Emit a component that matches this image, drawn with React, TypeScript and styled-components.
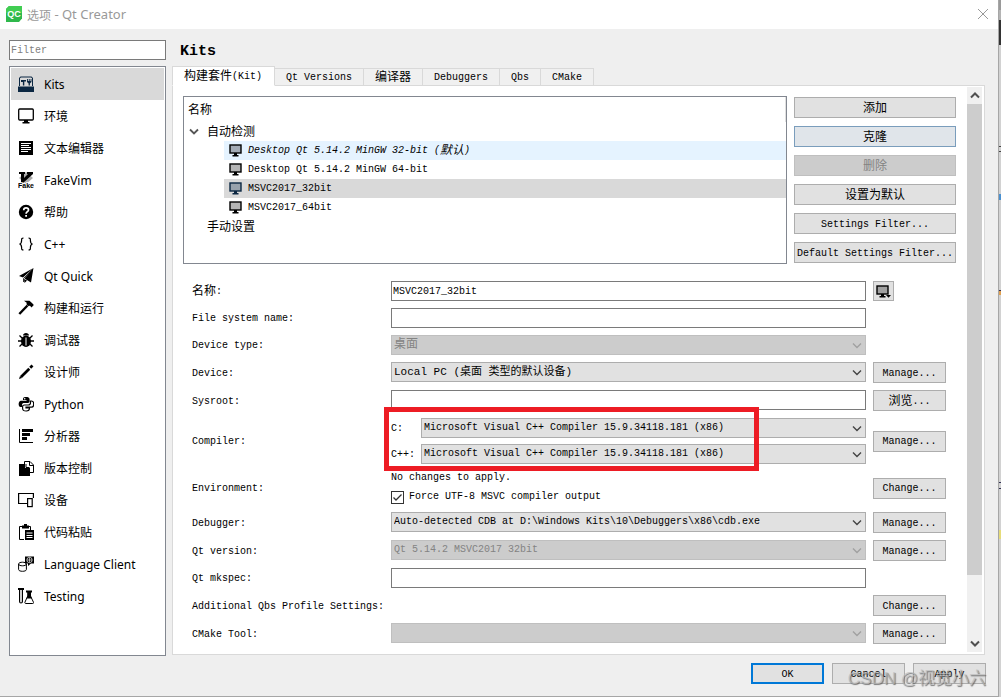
import React, { useState } from "react";
import styled, { createGlobalStyle, css } from "styled-components";

const mono = `"Liberation Mono", "Noto Sans CJK SC", monospace`;
const sans = `"Noto Sans", "Noto Sans CJK SC", sans-serif`;

const GlobalStyle = createGlobalStyle`
  *, *::before, *::after { box-sizing: border-box; }
  body { margin: 0; background: #efefef; color: #000; font: 10px/14px ${mono}; }
  button, input, select { font: inherit; color: inherit; margin: 0; border-radius: 0; }
  button:focus, input:focus, select:focus { outline: none; }
  svg { display: block; flex: none; }
`;

/* ---------- frame ---------- */

const Screen = styled.div`
  display: flex;
  min-height: 100vh;
`;

const Desktop = styled.div`
  width: 2px;
  background: linear-gradient(
    #9a9a9a 0 10px, #b4b4b4 10px 20px, #333 20px 45px, #d2d2d2 45px 146px,
    #444 146px 147px, #d2d2d2 147px 151px, #444 151px 152px, #d2d2d2 152px 194px,
    #4a90d0 194px 200px, #d2d2d2 200px 290px, #335 290px 291px, #e0a050 291px 295px,
    #d2d2d2 295px 482px, #335 482px 483px, #d2d2d2 483px 488px, #335 488px 489px,
    #d2d2d2 489px 530px, #e6dc7a 530px 539px, #d2d2d2 539px
  );
`;

const Window = styled.main`
  flex: 1;
  min-width: 0;
  display: flex;
  flex-direction: column;
  background: #efefef;
  border-right: 1px solid #a6a6a6;
  border-bottom: 1px solid #a6a6a6;
`;

const TitleBar = styled.header`
  display: flex;
  align-items: center;
  gap: 5px;
  height: 29px;
  padding: 0 9px 2px 6px;
  background: #fff;
  color: #999;
  font: 13px/18px ${sans};
`;

const Title = styled.span`
  flex: 1;
`;

const CloseButton = styled.button`
  padding: 0;
  border: 0;
  background: none;
`;

const Body = styled.div`
  flex: 1;
  display: flex;
  gap: 6px;
  padding: 11px 13px 0 9px;
`;

/* ---------- sidebar ---------- */

const Sidebar = styled.aside`
  width: 157px;
  display: flex;
  flex-direction: column;
  gap: 6px;
`;

const TextInput = styled.input`
  width: 100%;
  min-width: 0;
  height: 20px;
  padding: 0 1px;
  border: 1px solid #7a7a7a;
  background: #fff;
  &::placeholder { color: #808080; opacity: 1; }
`;

const PageList = styled.nav`
  flex: 1;
  padding: 1px;
  border: 1px solid #828790;
  background: #fff;
`;

const PageItem = styled.button<{ $active: boolean }>`
  display: flex;
  align-items: center;
  gap: 10px;
  width: 100%;
  height: 32px;
  padding: 0 7px;
  border: 0;
  background: ${(p) => (p.$active ? "#d9d9d9" : "transparent")};
  color: #000;
  font: 12px/18px ${sans};
  text-align: left;
  span { padding-top: 2px; }
`;

/* ---------- right side ---------- */

const Content = styled.section`
  flex: 1;
  min-width: 0;
  display: flex;
  flex-direction: column;
  padding-bottom: 1px;
`;

const Heading = styled.h1`
  margin: 0;
  padding: 2px 8px 4px;
  font-size: 15px;
  line-height: 20px;
`;

const TabBar = styled.div`
  display: flex;
  align-items: flex-end;
  margin-bottom: -1px;
  position: relative;
`;

const Tab = styled.button<{ $active: boolean }>`
  height: 18px;
  padding: 1px 11px 0;
  border: 1px solid #d9d9d9;
  border-left-width: 0;
  background: #f0f0f0;
  line-height: 15px;
  white-space: nowrap;
  ${(p) =>
    p.$active &&
    css`
      height: 20px;
      padding-right: 12px;
      border-left-width: 1px;
      border-bottom-color: #fff;
      background: #fff;
    `}
`;

const Cjk = styled.span`
  font-size: 12px;
  line-height: 12px;
  vertical-align: -1px;
`;

const Panel = styled.div`
  flex: 1;
  display: flex;
  border: 1px solid #d9d9d9;
  background: #fff;
`;

const Scrolled = styled.div`
  flex: 1;
  min-width: 0;
  padding: 10px 11px 9px 10px;
`;

const ScrollBar = styled.div`
  width: 15px;
  margin: 1px 2px 2px 0;
  display: flex;
  flex-direction: column;
  background: #f0f0f0;
`;

const ScrollArrow = styled.button`
  display: grid;
  place-items: center;
  height: 17px;
  padding: 0;
  border: 0;
  background: none;
`;

const ScrollThumb = styled.div`
  flex: 471;
  background: #cdcdcd;
`;

const ScrollRest = styled.div`
  flex: 60;
`;

const KitArea = styled.div`
  display: flex;
  gap: 7px;
`;

const Tree = styled.div`
  flex: 1;
  height: 168px;
  border: 1px solid #828790;
`;

const TreeHeader = styled.div`
  height: 25px;
  padding: 0 4px;
  border-right: 1px solid #e0e0e0;
  font: 12px/26px ${sans};
`;

const TreeGroup = styled.div`
  display: flex;
  align-items: center;
  height: 19px;
  padding-left: 5px;
  font: 12px/18px ${sans};
`;

const Twisty = styled.span`
  width: 18px;
`;

const KitRow = styled.div<{ $state: string }>`
  display: flex;
  align-items: center;
  gap: 6px;
  height: 19px;
  margin-left: 40px;
  padding-left: 5px;
  font-style: ${(p) => (p.$state === "hover" ? "italic" : "normal")};
  background: ${(p) => (p.$state === "hover" ? "#e5f3ff" : p.$state === "selected" ? "#d9d9d9" : "#fff")};
`;

const KitButtons = styled.div`
  width: 162px;
  display: flex;
  flex-direction: column;
  gap: 8px;
  padding-top: 1px;
`;

const PushButton = styled.button<{ $tone?: "hover" | "primary" }>`
  display: flex;
  align-items: center;
  justify-content: center;
  height: 21px;
  min-width: 73px;
  padding: 2px 0 0;
  border: 1px solid #adadad;
  background: #e1e1e1;
  line-height: 16px;
  white-space: nowrap;
  ${(p) => p.$tone === "hover" && css`border-color: #7a9dbc; background: #e0e5ea;`}
  ${(p) => p.$tone === "primary" && css`border: 2px solid #0078d7;`}
  &:disabled { border-color: #bfbfbf; background: #ccc; color: #838383; }
`;

const IconButton = styled(PushButton)`
  width: 21px;
  min-width: 0;
  height: 20px;
  padding: 0;
`;

const Form = styled.form`
  display: grid;
  gap: 7px 0;
  padding: 17px 10px 0 9px;
`;

const FormRow = styled.div`
  display: grid;
  grid-template-columns: 199px minmax(0, 1fr) 73px;
  align-items: center;
  min-height: 20px;
`;

const RowLabel = styled.label`
  padding-top: 2px;
`;

const Side = styled.div`
  display: flex;
  flex-direction: column;
  align-items: stretch;
`;

const Field = styled.div`
  align-self: start;
  padding-right: 7px;
`;

const SelectBox = styled.div`
  flex: 1;
  position: relative;
  svg { position: absolute; right: 4px; top: 7px; pointer-events: none; }
`;

const Select = styled.select<{ $size: number }>`
  appearance: none;
  display: block;
  width: 100%;
  height: 20px;
  padding: 0 20px 0 2px;
  border: 1px solid #adadad;
  background: #e1e1e1;
  font-size: ${(p) => p.$size}px;
  line-height: 16px;
  &:disabled { border-color: #bfbfbf; background: #ccc; color: #838383; opacity: 1; }
`;

const Compilers = styled.div`
  position: relative;
  display: grid;
  gap: 6px;
`;

const CompilerLine = styled.div`
  display: flex;
  align-items: center;
  label { width: 30px; padding-top: 1px; }
`;

const Highlight = styled.div`
  position: absolute;
  left: -7px;
  top: -11px;
  bottom: -7px;
  width: 375px;
  border: 5px solid #ed1c24;
  pointer-events: none;
`;

const Environment = styled.div`
  display: flex;
  flex-direction: column;
  gap: 5px;
  height: 34px;
`;

const CheckLabel = styled.label`
  display: flex;
  align-items: center;
  gap: 5px;
`;

const CheckBox = styled.span`
  display: grid;
  > * { grid-area: 1 / 1; }
  svg { pointer-events: none; }
`;

const Check = styled.input`
  appearance: none;
  width: 13px;
  height: 13px;
  border: 1px solid #333;
  background: #fff;
  &:not(:checked) + svg { visibility: hidden; }
`;

const Footer = styled.footer`
  position: relative;
  display: flex;
  justify-content: flex-end;
  gap: 8px;
  padding: 7px 12px 12px;
`;

const Watermark = styled.span`
  position: absolute;
  right: 12px;
  bottom: 5px;
  color: rgba(190, 190, 190, 0.7);
  text-shadow: 1px 1px 1px rgba(90, 90, 90, 0.8);
  font: 17px/24px "Liberation Sans", "Noto Sans CJK SC", sans-serif;
  white-space: nowrap;
  pointer-events: none;
`;

/* ---------- drawings ---------- */

const Chevron = ({ color = "#444", up = false, w = 1.4 }: { color?: string; up?: boolean; w?: number }) => (
  <svg width="10" height="7" viewBox="0 0 10 7" fill="none" stroke={color} strokeWidth={w}>
    <path d={up ? "M1 5.5 5 1.5 9 5.5" : "M1 1.5 5 5.5 9 1.5"} />
  </svg>
);

const Monitor = ({ color = "#000", screen = "#aaa", menu = false }: { color?: string; screen?: string; menu?: boolean }) => (
  <svg width={menu ? 15 : 13} height="13" viewBox={menu ? "0 0 15 13" : "0 0 13 13"}>
    <rect x="1" y="1" width="11" height="8" fill={screen} stroke={color} strokeWidth="1.4" />
    <path d="M5 9h3v2h1.500v1.500h-6V11H5z" fill={color} />
    {menu && <path d="M10 10h5l-2.500 2.800z" fill={color} />}
  </svg>
);

const Logo = () => (
  <svg width="16" height="16" viewBox="0 0 16 16">
    <path d="M3 0h13v12.500L13 16H0V3z" fill="#2fb84c" />
    <path d="M3 0h13v7H0V3z" fill="#41cd52" />
    <text x="8" y="11" fontSize="9" fontWeight="700" fontFamily="Liberation Sans" textAnchor="middle" fill="#fff">QC</text>
  </svg>
);

const line = { fill: "none", stroke: "#000" };

const icons: Record<string, React.ReactNode> = {
  kits: (
    <g fill="#0b2742">
      <path d="M1 10V2l1.500-1.500h11L15 2v8h-1V2.300L13 1.500H3l-1 .8V10z" />
      <path d="M0 10.500h16V16H0z" />
      <path d="M3 4h5v1.500H6.300v4H4.900V6H3zM9 3h.9v2h.9V3h.9v2h.9V3h.9v3L11.900 7.500v2h-1.300v-2L9 6z" />
    </g>
  ),
  environment: (
    <>
      <rect x=".7" y="1" width="14.600" height="11" rx="1" {...line} strokeWidth="1.300" />
      <path d="M6 12h4v2h1.500v1.500h-7V14H6z" />
    </>
  ),
  editor: (
    <>
      <path d="M1 1h14v14H1z" />
      <path d="M3 3.500h10M3 5.500h8M3 7.500h10M3 9.500h10M3 11.500h7" fill="none" stroke="#fff" />
    </>
  ),
  fakevim: (
    <>
      <path d="M8 0l7 6-7 6-7-6z" fill="#aaa" />
      <path d="M1 0h6v2H6v4l4-4H9V0h6v2L5 11H3V2H1z" />
      <text x="8" y="15.500" fontSize="7" fontWeight="700" fontFamily="Liberation Sans" textAnchor="middle" stroke="#fff" strokeWidth="1.500" paintOrder="stroke">Fake</text>
    </>
  ),
  help: (
    <>
      <circle cx="8" cy="8" r="7.200" />
      <path d="M5.700 6.200c0-3.200 4.800-2.900 4.800-.3 0 1.700-2.400 1.800-2.400 3.900" fill="none" stroke="#fff" strokeWidth="1.700" />
      <path d="M7.200 11h1.800v1.800H7.200z" fill="#fff" />
    </>
  ),
  cpp: (
    <path d="M5.500 2C3.500 2 3.600 3 3.600 4.500S3.500 7.600 1.500 8c2 .4 2.100 2 2.100 3.500S3.500 14 5.500 14M10.500 2c2 0 1.900 1 1.900 2.500s.1 3.100 2.100 3.500c-2 .4-2.100 2-2.100 3.500s.1 2.500-1.900 2.500" {...line} strokeWidth="1.200" />
  ),
  quick: (
    <>
      <path d="M15.500 0 1 8l4 1.500zM15.500 0 6.500 10.500l6.500 4z" />
      <path d="M6 11l3 1.500L6.500 15z" />
      <path d="M15 1 5.500 10.500v3.500" fill="none" stroke="#000" strokeWidth=".8" />
    </>
  ),
  build: (
    <>
      <path d="M6 .8h5.500l3 2.700 1.300 1.600-2.300 2.300-1.500-1.700-1.700.3-1.800-1.800.2-1.500z" />
      <path d="M9.500 5.500 1.300 14" fill="none" stroke="#000" strokeWidth="2.400" />
    </>
  ),
  debugger: (
    <>
      <path d="M5 3.500C5 0 11 0 11 3.500z" />
      <ellipse cx="8" cy="9.300" rx="5" ry="5.700" />
      <path d="M4.500 6.500 1.500 3.500M0 9h4.500M4.500 11.500 1.500 14.500M11.500 6.500l3-3M16 9h-4.500M11.500 11.500l3 3" {...line} strokeWidth="1.300" />
      <path d="M8 5.500v8" stroke="#fff" />
    </>
  ),
  designer: (
    <>
      <path d="M3 13 11.300 4.700" {...line} strokeWidth="2.700" />
      <path d="M12.200 3.800 14.500 1.500" {...line} strokeWidth="2.700" />
      <path d="M1 15l1-3 2 2z" />
    </>
  ),
  python: (
    <>
      <path d="M8 1c-3 0-3 1.200-3 3h3.500v.8H3C0 4.800 0 11 2.500 11H4V9c0-1.500 1-2 2.300-2H10c1 0 1.600-.7 1.600-1.700V3.500C11.600 1.500 10 1 8 1z" />
      <path d="M12.500 5h1c3 0 3 6 0 6.200H8v.8h3.500c0 2-.5 3-3.200 3s-3.700-.8-3.700-2.700v-1.500C4.600 9.500 5.400 9 6.500 9h3.700c1.300 0 2.300-.7 2.300-2.200z" {...line} strokeWidth="1.200" />
      <circle cx="6.700" cy="2.800" r=".8" fill="#fff" />
    </>
  ),
  analyzer: (
    <>
      <path d="M1.500 1v13.500H15" {...line} />
      <path d="M4 1h11v3H4zM4 5h8v3H4zM4 9h5v3H4z" />
    </>
  ),
  vcs: (
    <>
      <path d="M1 4h5v4h6v8H1z" />
      <path d="M6.500 8.500V1.500H12L15.500 5v7.500H12M11.500 1v4.500h4M8 4v3.500h3.500" {...line} />
    </>
  ),
  devices: (
    <>
      <path d="M9 11.500H.6V1.500h14.800V6" {...line} strokeWidth="1.200" />
      <rect x="9.600" y="6.600" width="4.600" height="8" {...line} strokeWidth="1.200" />
    </>
  ),
  paste: (
    <>
      <path d="M6 15.500H1.500v-13h11V6" {...line} />
      <path d="M4 1.500h2V0h3v1.500h2v3H4zM7 6h9v10H7z" />
      <path d="M8.500 9h6M8.500 11.500h6M8.500 13.500h6" stroke="#fff" />
    </>
  ),
  language: (
    <>
      <path d="M.6 8v5.500c0 2.400 7.800 2.400 7.800 0V8M.6 8c0-2.400 7.800-2.400 7.800 0s-7.800 2.400-7.800 0z" {...line} />
      <path d="M7 .5h9v7h-3L10 10V7.500H7z" />
      <circle cx="11.500" cy="4" r="2.700" fill="none" stroke="#fff" strokeWidth=".7" />
      <path d="M11.500 1.500v5M9 4h5" stroke="#fff" strokeWidth=".6" />
    </>
  ),
  testing: (
    <>
      <path d="M0 0h6v2H0z" />
      <path d="M1.600 2v11.500c0 2 2.800 2 2.800 0V2" {...line} strokeWidth="1.200" />
      <path d="M8 2.500h6v2H8z" />
      <path d="M9.700 4v4L6.800 14.500c0 .6.400 1 1 1h7c.6 0 .8-.4.800-1L12.500 8V4" {...line} />
      <path d="M10 4h2.500v3.500l1.500 3H8.500L10 7.500z" />
    </>
  ),
};

const Icon = ({ name }: { name: string }) => (
  <svg width="16" height="16" viewBox="0 0 16 16" aria-hidden="true">{icons[name]}</svg>
);

/* ---------- data ---------- */

const pages = [
  ["kits", "Kits"], ["environment", "环境"], ["editor", "文本编辑器"], ["fakevim", "FakeVim"],
  ["help", "帮助"], ["cpp", "C++"], ["quick", "Qt Quick"], ["build", "构建和运行"],
  ["debugger", "调试器"], ["designer", "设计师"], ["python", "Python"], ["analyzer", "分析器"],
  ["vcs", "版本控制"], ["devices", "设备"], ["paste", "代码粘贴"],
  ["language", "Language Client"], ["testing", "Testing"],
];

const tabs: React.ReactNode[] = [
  <><Cjk>构建套件</Cjk>(Kit)</>, "Qt Versions", <Cjk>编译器</Cjk>, "Debuggers", "Qbs", "CMake",
];

const compiler = "Microsoft Visual C++ Compiler 15.9.34118.181 (x86)";

/* ---------- pieces ---------- */

type ComboProps = { id: string; value: string; disabled?: boolean; size?: number };

const Combo = ({ id, value, disabled, size = 10 }: ComboProps) => (
  <SelectBox>
    <Select id={id} disabled={disabled} $size={size}>
      <option>{value}</option>
    </Select>
    <Chevron color={disabled ? "#a0a0a0" : "#444"} />
  </SelectBox>
);

type RowProps = { label: React.ReactNode; id?: string; side?: React.ReactNode; children?: React.ReactNode };

const Row = ({ label, id, side, children }: RowProps) => (
  <FormRow>
    <RowLabel htmlFor={id}>{label}</RowLabel>
    <Field>{children}</Field>
    <Side>{side}</Side>
  </FormRow>
);

const Manage = () => <PushButton type="button">Manage...</PushButton>;
const Change = ({ id }: { id?: string }) => <PushButton type="button" id={id}>Change...</PushButton>;

export default function App() {
  const [page, setPage] = useState("kits");
  const [tab, setTab] = useState(0);

  return (
    <Screen>
      <GlobalStyle />
      <Window>
        <TitleBar>
          <Logo />
          <Title><Cjk>选项</Cjk> - Qt Creator</Title>
          <CloseButton aria-label="Close">
            <svg width="12" height="12" viewBox="0 0 12 12" stroke="#999" fill="none">
              <path d="M1 1l10 10M11 1 1 11" />
            </svg>
          </CloseButton>
        </TitleBar>

        <Body>
          <Sidebar>
            <TextInput placeholder="Filter" aria-label="Filter" />
            <PageList>
              {pages.map(([key, name]) => (
                <PageItem key={key} $active={key === page} onClick={() => setPage(key)}>
                  <Icon name={key} />
                  <span>{name}</span>
                </PageItem>
              ))}
            </PageList>
          </Sidebar>

          <Content>
            <Heading>Kits</Heading>
            <TabBar role="tablist">
              {tabs.map((name, i) => (
                <Tab key={i} role="tab" aria-selected={i === tab} $active={i === tab} onClick={() => setTab(i)}>
                  {name}
                </Tab>
              ))}
            </TabBar>
            <Panel>
              <Scrolled>
                <KitArea>
                  <Tree>
                    <TreeHeader>名称</TreeHeader>
                    <TreeGroup><Twisty><Chevron color="#555" w={1.8} /></Twisty>自动检测</TreeGroup>
                    <KitRow $state="hover">
                      <Monitor screen="#a3abb5" />
                      <span>Desktop Qt 5.14.2 MinGW 32-bit (<Cjk>默认</Cjk>)</span>
                    </KitRow>
                    <KitRow $state="normal"><Monitor screen="#b5b5b5" />Desktop Qt 5.14.2 MinGW 64-bit</KitRow>
                    <KitRow $state="selected"><Monitor color="#0b2742" screen="#98a2ac" />MSVC2017_32bit</KitRow>
                    <KitRow $state="normal"><Monitor screen="#b5b5b5" />MSVC2017_64bit</KitRow>
                    <TreeGroup><Twisty />手动设置</TreeGroup>
                  </Tree>
                  <KitButtons>
                    <PushButton><Cjk>添加</Cjk></PushButton>
                    <PushButton $tone="hover"><Cjk>克隆</Cjk></PushButton>
                    <PushButton disabled><Cjk>删除</Cjk></PushButton>
                    <PushButton><Cjk>设置为默认</Cjk></PushButton>
                    <PushButton>Settings Filter...</PushButton>
                    <PushButton>Default Settings Filter...</PushButton>
                  </KitButtons>
                </KitArea>

                <Form onSubmit={(e) => e.preventDefault()}>
                  <Row
                    label={<><Cjk>名称</Cjk>:</>}
                    id="name"
                    side={<IconButton type="button" aria-label="Kit icon"><Monitor screen="#a0a0a0" menu /></IconButton>}
                  >
                    <TextInput id="name" defaultValue="MSVC2017_32bit" />
                  </Row>
                  <Row label="File system name:" id="fsname"><TextInput id="fsname" /></Row>
                  <Row label="Device type:" id="devtype"><Combo id="devtype" value="桌面" size={12} disabled /></Row>
                  <Row label="Device:" id="device" side={<Manage />}>
                    <Combo id="device" value="Local PC (桌面 类型的默认设备)" size={11} />
                  </Row>
                  <Row label="Sysroot:" id="sysroot" side={<PushButton type="button"><Cjk>浏览</Cjk>...</PushButton>}>
                    <TextInput id="sysroot" />
                  </Row>
                  <Row label="Compiler:" id="cc" side={<Manage />}>
                    <Compilers>
                      <CompilerLine><label htmlFor="cc">C:</label><Combo id="cc" value={compiler} /></CompilerLine>
                      <CompilerLine><label htmlFor="cxx">C++:</label><Combo id="cxx" value={compiler} /></CompilerLine>
                      <Highlight />
                    </Compilers>
                  </Row>
                  <Row label="Environment:" id="environment" side={<Change id="environment" />}>
                    <Environment>
                      <span>No changes to apply.</span>
                      <CheckLabel>
                        <CheckBox>
                          <Check type="checkbox" defaultChecked />
                          <svg width="13" height="13" viewBox="0 0 13 13" fill="none" stroke="#333" strokeWidth="1.300">
                            <path d="M2.500 6.500 5 9l5.500-5.500" />
                          </svg>
                        </CheckBox>
                        Force UTF-8 MSVC compiler output
                      </CheckLabel>
                    </Environment>
                  </Row>
                  <Row label="Debugger:" id="debugger" side={<Manage />}>
                    <Combo id="debugger" value={"Auto-detected CDB at D:\\Windows Kits\\10\\Debuggers\\x86\\cdb.exe"} />
                  </Row>
                  <Row label="Qt version:" id="qt" side={<Manage />}>
                    <Combo id="qt" value="Qt 5.14.2 MSVC2017 32bit" disabled />
                  </Row>
                  <Row label="Qt mkspec:" id="mkspec"><TextInput id="mkspec" /></Row>
                  <Row label="Additional Qbs Profile Settings:" id="qbs" side={<Change id="qbs" />} />
                  <Row label="CMake Tool:" id="cmake" side={<Manage />}><Combo id="cmake" value="" disabled /></Row>
                </Form>
              </Scrolled>
              <ScrollBar>
                <ScrollArrow aria-label="Scroll up"><Chevron up color="#505050" w={2} /></ScrollArrow>
                <ScrollThumb />
                <ScrollRest />
                <ScrollArrow aria-label="Scroll down"><Chevron color="#505050" w={2} /></ScrollArrow>
              </ScrollBar>
            </Panel>
          </Content>
        </Body>

        <Footer>
          <PushButton $tone="primary">OK</PushButton>
          <PushButton>Cancel</PushButton>
          <PushButton>Apply</PushButton>
          <Watermark>CSDN @视觉小六</Watermark>
        </Footer>
      </Window>
      <Desktop />
    </Screen>
  );
}
